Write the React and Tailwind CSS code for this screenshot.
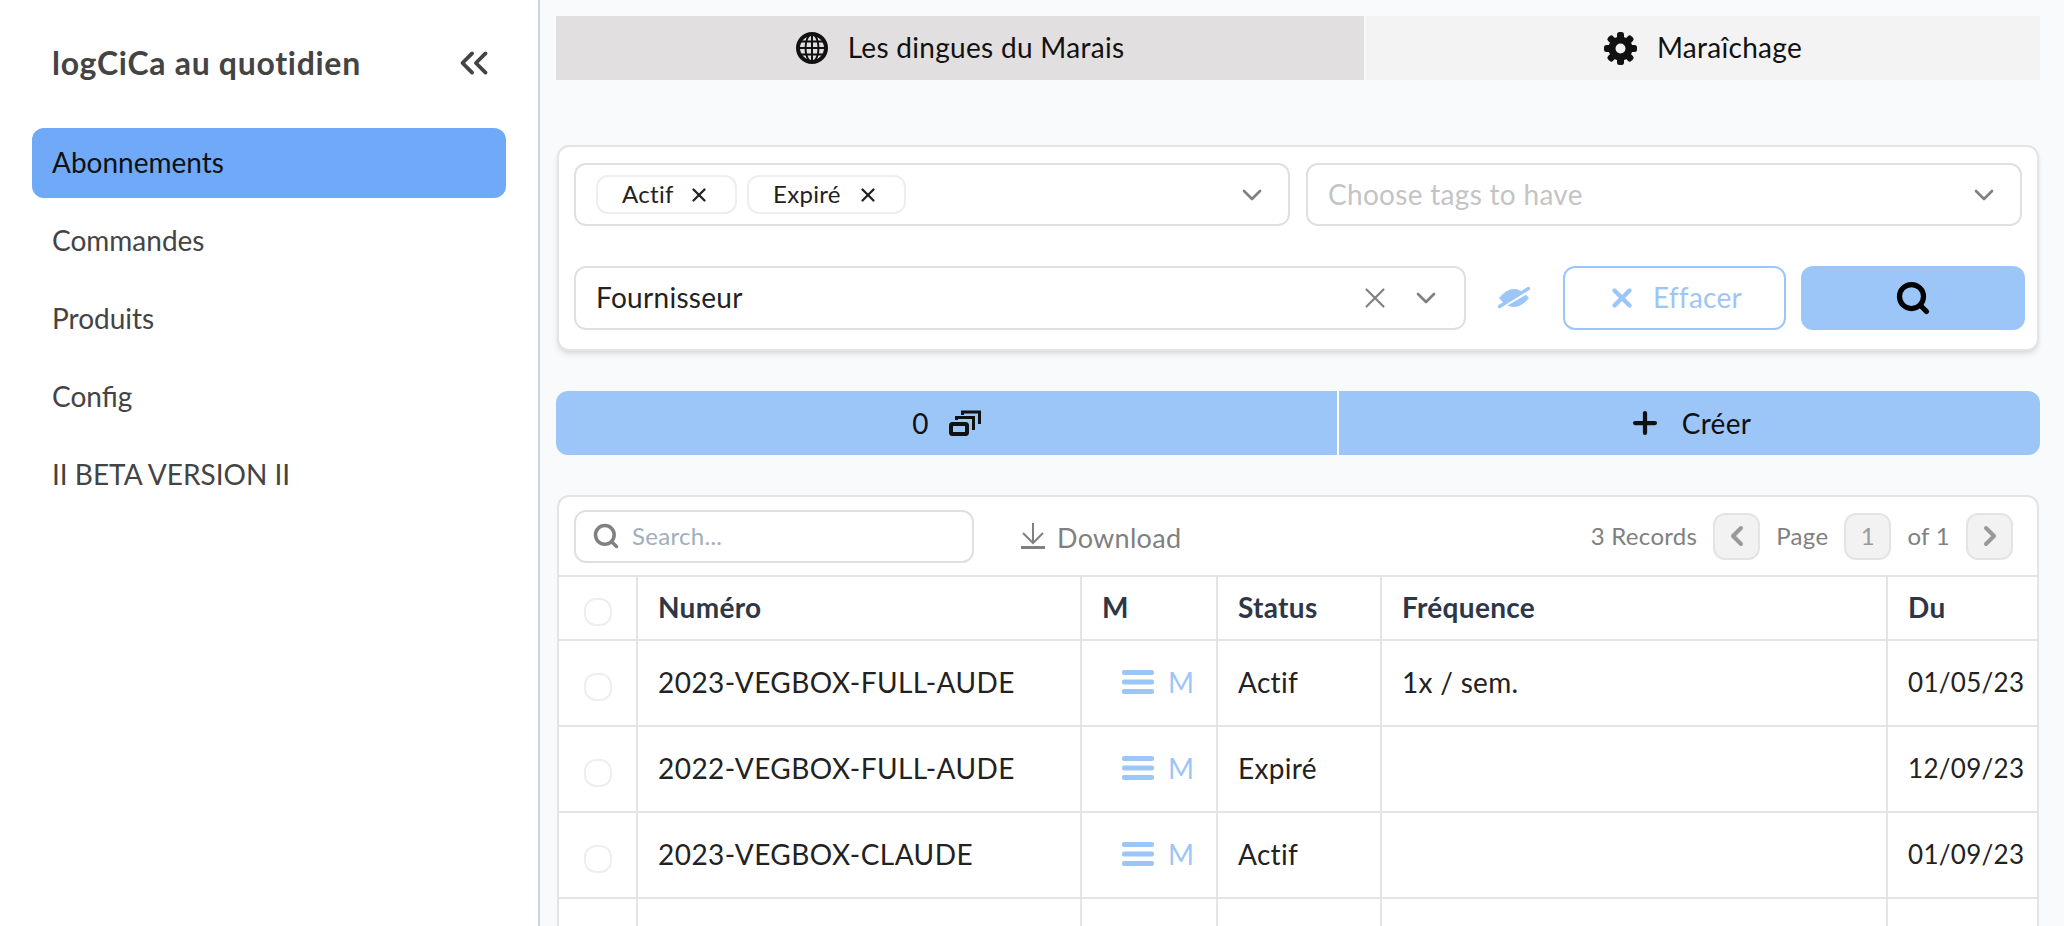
import { ChevronsLeft, ChevronDown, ChevronLeft, ChevronRight, X, Search, Plus } from 'lucide-react';

const NAV = ['Abonnements', 'Commandes', 'Produits', 'Config', 'II BETA VERSION II'];

const ROWS = [
  { numero: '2023-VEGBOX-FULL-AUDE', status: 'Actif', frequence: '1x / sem.', du: '01/05/23' },
  { numero: '2022-VEGBOX-FULL-AUDE', status: 'Expiré', frequence: '', du: '12/09/23' },
  { numero: '2023-VEGBOX-CLAUDE', status: 'Actif', frequence: '', du: '01/09/23' },
  { numero: '', status: '', frequence: '', du: '' },
];

function GlobeIcon() {
  return (
    <svg width="32" height="32" viewBox="0 0 32 32" fill="none" stroke="currentColor">
      <circle cx="16" cy="16" r="14" strokeWidth="4" />
      <ellipse cx="16" cy="16" rx="6.5" ry="14" strokeWidth="2" />
      <path d="M16 2v28M2 16h28M4.5 9.5h23M4.5 22.5h23" strokeWidth="2" />
    </svg>
  );
}

function GearIcon() {
  return (
    <svg width="33" height="33" viewBox="0 0 33 33" fill="currentColor">
      {[0, 45, 90, 135, 180, 225, 270, 315].map((a) => (
        <rect key={a} x="13" y="0" width="7" height="10" rx="2.5" transform={`rotate(${a} 16.5 16.5)`} />
      ))}
      <circle cx="16.5" cy="16.5" r="8.5" fill="none" stroke="currentColor" strokeWidth="7" />
    </svg>
  );
}

function EyeIcon() {
  return (
    <svg width="32" height="24" viewBox="0 0 32 24" className="text-[#9dc6f8]">
      <path d="M1 12Q16 -6 31 12Q16 30 1 12Z" fill="currentColor" />
      <path d="M0 23L32 4.5" stroke="white" strokeWidth="3.5" />
      <path d="M1.5 20.5L30.5 2.5" stroke="currentColor" strokeWidth="3.5" strokeLinecap="round" />
    </svg>
  );
}

function Stacked() {
  return (
    <svg width="32" height="26" viewBox="0 0 32 26" fill="none" stroke="currentColor">
      <rect x="2" y="14" width="16" height="10" rx="1.5" strokeWidth="4" />
      <path d="M7.5 10V7.5H24.5V20" strokeWidth="3" />
      <path d="M13.5 5V2H30.5V14" strokeWidth="3" />
    </svg>
  );
}

function DownloadIcon() {
  return (
    <svg width="24" height="26" viewBox="0 0 24 26" fill="none" stroke="currentColor" strokeWidth="2">
      <path d="M12 0V19M2 10L12 20L22 10" />
      <path d="M0 24.5H24" strokeWidth="3" />
    </svg>
  );
}

function Bars() {
  return (
    <svg width="32" height="24" viewBox="0 0 32 24" fill="currentColor">
      <rect x="0" y="0" width="32" height="5" rx="2" />
      <rect x="0" y="9.5" width="32" height="5" rx="2" />
      <rect x="0" y="19" width="32" height="5" rx="2" />
    </svg>
  );
}

function Tag({ label, width }) {
  return (
    <span className={`flex items-center justify-between h-[39px] pl-6 pr-[25px] border-2 border-[#eeeeee] rounded-xl text-[24px] text-[#222222] ${width}`}>
      <span className="pb-[2px]">{label}</span>
      <X size={22} strokeWidth={2.5} />
    </span>
  );
}

function Pager({ children }) {
  return (
    <span className="flex items-center justify-center w-[47px] h-[47px] bg-[#f2f2f2] border-2 border-[#e4e4e4] rounded-xl text-[#999999]">
      {children}
    </span>
  );
}

export default function App() {
  return (
    <div className="flex h-[926px] overflow-hidden bg-[#f9fafb] text-[#222222] font-['Lato','Open_Sans',sans-serif] text-[28px] tracking-[0.3px]">
      <aside className="w-[540px] shrink-0 bg-white border-r-2 border-[#cbd5e1] px-8">
        <div className="flex items-center justify-between h-[128px] pl-5 pr-[9px] pb-[2px]">
          <span className="font-bold text-[#444444] text-[32px] tracking-[0.7px]">logCiCa au quotidien</span>
          <ChevronsLeft size={46} strokeWidth={2} className="text-[#444444]" />
        </div>
        <nav className="flex flex-col gap-2 tracking-normal">
          {NAV.map((n, i) => (
            <a key={n} className={`flex items-center h-[70px] px-5 pb-[2px] rounded-xl ${i === 0 ? 'bg-[#70a9f7] text-[#111111]' : 'text-[#444444]'}`}>
              {n}
            </a>
          ))}
        </nav>
      </aside>

      <main className="flex-1 min-w-0 pl-4 pr-6 pt-4">
        <div className="flex h-16 gap-[2px]">
          <div className="flex items-center justify-center gap-5 w-[808px] bg-[#e1dfdf] text-[#111111]">
            <GlobeIcon />
            <span className="pb-[2px]">Les dingues du Marais</span>
          </div>
          <div className="flex items-center justify-center gap-5 flex-1 bg-[#f3f3f3] text-[#111111]">
            <GearIcon />
            <span className="pb-[2px]">Maraîchage</span>
          </div>
        </div>

        <section className="mt-[65px] mx-px h-[206px] bg-white border-2 border-[#e4e4e4] rounded-xl shadow-md pl-[15px] pr-[12px] pt-4">
          <div className="flex gap-4">
            <div className="flex items-center justify-between w-[716px] h-[63px] border-2 border-[#e0e0e0] rounded-xl pl-5 pr-[20px]">
              <div className="flex gap-[10px]">
                <Tag label="Actif" width="w-[141px]" />
                <Tag label="Expiré" width="w-[159px]" />
              </div>
              <ChevronDown size={32} className="text-[#808080]" />
            </div>
            <div className="flex items-center justify-between w-[716px] h-[63px] border-2 border-[#e0e0e0] rounded-xl pl-5 pr-[20px] text-[#c4c4c4]">
              <span className="pb-[2px]">Choose tags to have</span>
              <ChevronDown size={32} className="text-[#808080]" />
            </div>
          </div>
          <div className="flex items-center mt-[40px]">
            <div className="flex items-center justify-between w-[892px] h-[64px] border-2 border-[#e0e0e0] rounded-xl pl-5 pr-[22px]">
              <span className="pb-[2px]">Fournisseur</span>
              <div className="flex items-center gap-[18px] text-[#808080]">
                <X size={34} strokeWidth={1.5} />
                <ChevronDown size={32} />
              </div>
            </div>
            <span className="ml-[32px]"><EyeIcon /></span>
            <button className="flex items-center justify-center gap-4 ml-[33px] w-[223px] h-[64px] border-2 border-[#9dc6f8] rounded-xl text-[#9dc6f8]">
              <X size={30} strokeWidth={3.5} />
              <span className="pb-[2px]">Effacer</span>
            </button>
            <button className="flex items-center justify-center ml-[15px] w-[224px] h-[64px] bg-[#9dc6f8] rounded-xl text-black">
              <Search size={36} strokeWidth={3.5} />
            </button>
          </div>
        </section>

        <div className="flex h-16 mt-[40px] rounded-xl overflow-hidden bg-[#9dc6f8] text-[#111111]">
          <div className="flex items-center justify-center gap-5 w-[783px] border-r-2 border-white">
            0 <Stacked />
          </div>
          <div className="flex items-center justify-center gap-5 flex-1">
            <Plus size={34} strokeWidth={3} />
            Créer
          </div>
        </div>

        <section className="mt-[40px] mx-px bg-white border-2 border-b-0 border-[#e4e4e4] rounded-t-xl">
          <div className="flex items-center h-[78px] pl-[15px] pr-[24px]">
            <div className="flex items-center gap-3 w-[400px] h-[53px] border-2 border-[#e0e0e0] rounded-xl px-4 text-[24px] text-[#a0aec0]">
              <Search size={28} strokeWidth={3} className="text-[#808080]" />
              Search...
            </div>
            <div className="flex items-center gap-3 ml-[47px] text-[#808080] text-[27px]">
              <DownloadIcon />
              <span className="pt-1">Download</span>
            </div>
            <div className="flex items-center ml-auto text-[#808080] text-[24px]">
              3 Records
              <span className="ml-4"><Pager><ChevronLeft size={32} strokeWidth={3} /></Pager></span>
              <span className="ml-4">Page</span>
              <span className="ml-4"><Pager>1</Pager></span>
              <span className="ml-4">of 1</span>
              <span className="ml-4"><Pager><ChevronRight size={32} strokeWidth={3} /></Pager></span>
            </div>
          </div>
          <table className="w-full table-fixed border-collapse">
            <colgroup>
              <col className="w-[78px]" />
              <col className="w-[444px]" />
              <col className="w-[136px]" />
              <col className="w-[164px]" />
              <col className="w-[506px]" />
              <col />
            </colgroup>
            <thead>
              <tr className="h-[64px] border-t-2 border-[#e4e4e4] text-[#2d3748] font-bold text-left">
                <th className="border-r-2 border-[#e4e4e4] text-center"><span className="inline-block align-middle w-[28px] h-[28px] rounded-xl border-2 border-[#eeeeee]" /></th>
                <th className="border-r-2 border-[#e4e4e4] pl-[20px] pb-[2px]">Numéro</th>
                <th className="border-r-2 border-[#e4e4e4] pl-[20px] pb-[2px]">M</th>
                <th className="border-r-2 border-[#e4e4e4] pl-[20px] pb-[2px]">Status</th>
                <th className="border-r-2 border-[#e4e4e4] pl-[20px] pb-[2px]">Fréquence</th>
                <th className="pl-[20px] pb-[2px]">Du</th>
              </tr>
            </thead>
            <tbody>
              {ROWS.map((r, i) => (
                <tr key={i} className="h-[86px] border-t-2 border-[#e4e4e4]">
                  <td className="border-r-2 border-[#e4e4e4] text-center"><span className="inline-block align-middle w-[28px] h-[28px] rounded-xl border-2 border-[#eeeeee]" /></td>
                  <td className="border-r-2 border-[#e4e4e4] pl-[20px] pb-[2px] tracking-[0.45px]">{r.numero}</td>
                  <td className="border-r-2 border-[#e4e4e4] pl-[20px] pb-[2px]">
                    {r.numero && (
                      <span className="flex items-center gap-[14px] pl-[20px] text-[#9dc6f8]">
                        <Bars />M
                      </span>
                    )}
                  </td>
                  <td className="border-r-2 border-[#e4e4e4] pl-[20px] pb-[2px]">{r.status}</td>
                  <td className="border-r-2 border-[#e4e4e4] pl-[20px] pb-[2px]">{r.frequence}</td>
                  <td className="pl-[20px] pb-[2px] text-[26px]">{r.du}</td>
                </tr>
              ))}
            </tbody>
          </table>
        </section>
      </main>
    </div>
  );
}
